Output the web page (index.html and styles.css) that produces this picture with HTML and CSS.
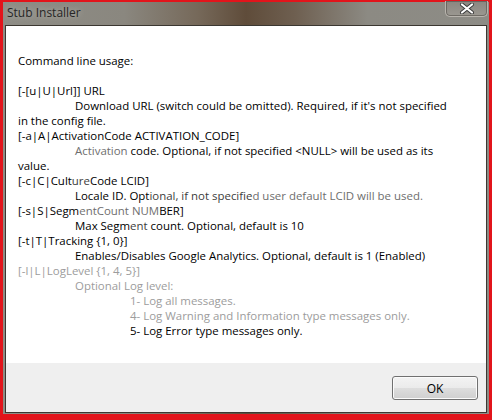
FILE: index.html
```html
<!DOCTYPE html>
<html>
<head>
<meta charset="utf-8">
<link rel="stylesheet" href="styles.css">
</head>
<body>
<div class="window">
  <div class="titlebar">
    <span class="title">Stub Installer</span>
    <span class="close"><svg width="16" height="11" viewBox="0 0 16 11"><path d="M3 1.5 L13 9.5 M13 1.5 L3 9.5" stroke="#3a3a3a" stroke-width="4" stroke-linecap="round"/><path d="M3 1.5 L13 9.5 M13 1.5 L3 9.5" stroke="#ffffff" stroke-width="2.2" stroke-linecap="round"/></svg></span>
  </div>
  <div class="client">
    <div class="content">
      <div class="line">Command line usage:</div>
      <div class="line">&nbsp;</div>
      <div class="line">[-[u|U|Url]] URL</div>
      <div class="line ind1">Download URL (switch could be omitted). Required, if it's not specified</div>
      <div class="line">in the config file.</div>
      <div class="line">[-a|A|ActivationCode ACTIVATION_CODE]</div>
      <div class="line ind1"><span class="fade2">Activation</span> code. Optional, if not specified &lt;NULL&gt; will be used as its</div>
      <div class="line">value.</div>
      <div class="line">[-c|C|Cult<span class="fade1">ure</span>Code LCID]</div>
      <div class="line ind1">Locale ID. Opt<span class="fade1">ional, if not specifie</span><span class="fade2">d user default LCID will be used.</span></div>
      <div class="line">[-s|S|Segm<span class="fade2">entCount NUM</span>BER]</div>
      <div class="line ind1">Max Segm<span class="fade1">ent</span> count. Optional, default is 10</div>
      <div class="line">[-t|T|Tracking {1, 0}]</div>
      <div class="line ind1">Enables/Disables Google Analytics. Optional, default is 1 (Enabled)</div>
      <div class="line gray">[-l|L|LogLevel {1, 4, 5}]</div>
      <div class="line ind1 gray">Optional Log level:</div>
      <div class="line ind2 gray">1- Log all messages.</div>
      <div class="line ind2 gray">4- Log Warning and Information type messages only.</div>
      <div class="line ind2">5- Log Error type messages only.</div>
    </div>
    <div class="footer">
      <button class="ok">OK</button>
    </div>
  </div>
</div>
</body>
</html>
```

FILE: styles.css
```css
html, body {
  margin: 0;
  padding: 0;
}
body {
  width: 492px;
  height: 420px;
  overflow: hidden;
  background: #e2141b;
  font-family: "Open Sans", "Noto Sans", sans-serif;
}
.window {
  margin: 2px 3px 0 3px;
  height: 412px;
  display: flex;
  flex-direction: column;
  background:
    linear-gradient(90deg,
      #8e8d86 0%, #8a877f 25%, #76695a 40%, #5f4c3a 50%, #6e5f50 60%,
      #8c8a83 75%, #8d8c86 100%);
}
.titlebar {
  height: 23px;
  display: flex;
  align-items: flex-start;
  justify-content: space-between;
  padding: 0 0 0 4px;
}
.title {
  font-size: 12px;
  line-height: 20px;
  color: #262626;
  text-shadow: 0 0 6px rgba(255,255,255,0.45);
  margin-top: 1px;
}
.close {
  width: 41px;
  height: 15px;
  margin-right: 1px;
  margin-top: -1px;
  border: 1px solid #b8b4ad;
  border-top: none;
  border-radius: 0 0 5px 5px;
  background: linear-gradient(#8a8680, #9b9891);
  display: flex;
  align-items: center;
  justify-content: center;
  box-shadow: inset 0 0 0 1px rgba(70,66,60,0.5);
}
.close svg { display: block; }
.client {
  margin: 0 2px 0 2px;
  height: 386px;
  border: 1px solid #3b3731;
  background: #ffffff;
  display: flex;
  flex-direction: column;
}
.content {
  flex: 1;
  padding: 27px 0 0 12px;
  font-size: 11.45px;
  line-height: 15px;
  color: #000;
}
.line {
  white-space: nowrap;
  height: 15px;
}
.ind1 { padding-left: 57px; }
.ind2 { padding-left: 112px; }
.gray { color: #9c9c9c; }
.fade1 { color: #3c3c3c; }
.fade2 { color: #6e6e6e; }
.footer {
  height: 49px;
  background: #efefef;
  display: flex;
  justify-content: flex-end;
  align-items: flex-start;
  padding-right: 8px;
}
.ok {
  margin-top: 13px;
  width: 86px;
  height: 24px;
  border: 1px solid #707070;
  border-radius: 3px;
  background: linear-gradient(#f3f3f3 0%, #ebebeb 48%, #dddddd 52%, #cfcfcf 100%);
  box-shadow: inset 0 0 0 1px #fbfbfb;
  font-family: "Open Sans", "Noto Sans", sans-serif;
  font-size: 12px;
  color: #000;
  padding: 0;
}
```
